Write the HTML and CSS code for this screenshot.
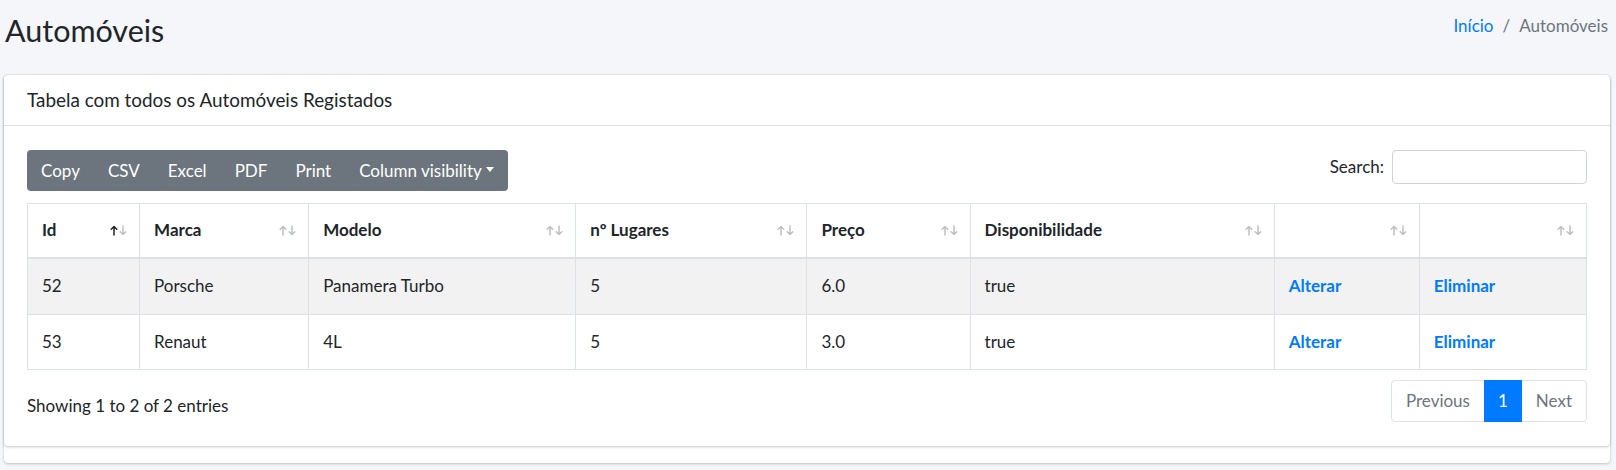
FILE: index.html
```html
<!DOCTYPE html>
<html lang="pt">
<head>
<meta charset="utf-8">
<title>Automóveis</title>
<link rel="stylesheet" href="styles.css">
</head>
<body>
<div class="content-header">
  <h1 class="page-title">Automóveis</h1>
  <ol class="breadcrumb">
    <li><a href="#">Início</a></li>
    <li class="sep">/</li>
    <li class="current">Automóveis</li>
  </ol>
</div>
<div class="card-shell">
  <div class="card">
    <div class="card-header">Tabela com todos os Automóveis Registados</div>
    <div class="card-body">
      <div class="toolbar">
        <div class="btn-group">
          <span class="btn">Copy</span>
          <span class="btn">CSV</span>
          <span class="btn">Excel</span>
          <span class="btn">PDF</span>
          <span class="btn">Print</span>
          <span class="btn">Column visibility<span class="caret"></span></span>
        </div>
        <label class="search">Search:<input type="search" class="search-input"></label>
      </div>
      <table class="data-table">
        <colgroup>
          <col class="c1"><col class="c2"><col class="c3"><col class="c4"><col class="c5"><col class="c6"><col class="c7"><col class="c8">
        </colgroup>
        <thead>
          <tr>
            <th><div class="th-in"><span>Id</span><svg class="sort asc" width="18" height="11" viewBox="0 0 18 11"><g fill="none" stroke-width="1.5" stroke-linecap="round" stroke-linejoin="round"><path class="up" d="M4 10V1.5M1.2 4.3L4 1.5L6.8 4.3"/><path class="down" d="M13 1v8.5M10.2 6.7L13 9.5L15.8 6.7"/></g></svg></div></th>
            <th><div class="th-in"><span>Marca</span><svg class="sort" width="18" height="11" viewBox="0 0 18 11"><g fill="none" stroke-width="1.5" stroke-linecap="round" stroke-linejoin="round"><path class="up" d="M4 10V1.5M1.2 4.3L4 1.5L6.8 4.3"/><path class="down" d="M13 1v8.5M10.2 6.7L13 9.5L15.8 6.7"/></g></svg></div></th>
            <th><div class="th-in"><span>Modelo</span><svg class="sort" width="18" height="11" viewBox="0 0 18 11"><g fill="none" stroke-width="1.5" stroke-linecap="round" stroke-linejoin="round"><path class="up" d="M4 10V1.5M1.2 4.3L4 1.5L6.8 4.3"/><path class="down" d="M13 1v8.5M10.2 6.7L13 9.5L15.8 6.7"/></g></svg></div></th>
            <th><div class="th-in"><span>nº Lugares</span><svg class="sort" width="18" height="11" viewBox="0 0 18 11"><g fill="none" stroke-width="1.5" stroke-linecap="round" stroke-linejoin="round"><path class="up" d="M4 10V1.5M1.2 4.3L4 1.5L6.8 4.3"/><path class="down" d="M13 1v8.5M10.2 6.7L13 9.5L15.8 6.7"/></g></svg></div></th>
            <th><div class="th-in"><span>Preço</span><svg class="sort" width="18" height="11" viewBox="0 0 18 11"><g fill="none" stroke-width="1.5" stroke-linecap="round" stroke-linejoin="round"><path class="up" d="M4 10V1.5M1.2 4.3L4 1.5L6.8 4.3"/><path class="down" d="M13 1v8.5M10.2 6.7L13 9.5L15.8 6.7"/></g></svg></div></th>
            <th><div class="th-in"><span>Disponibilidade</span><svg class="sort" width="18" height="11" viewBox="0 0 18 11"><g fill="none" stroke-width="1.5" stroke-linecap="round" stroke-linejoin="round"><path class="up" d="M4 10V1.5M1.2 4.3L4 1.5L6.8 4.3"/><path class="down" d="M13 1v8.5M10.2 6.7L13 9.5L15.8 6.7"/></g></svg></div></th>
            <th><div class="th-in"><span></span><svg class="sort" width="18" height="11" viewBox="0 0 18 11"><g fill="none" stroke-width="1.5" stroke-linecap="round" stroke-linejoin="round"><path class="up" d="M4 10V1.5M1.2 4.3L4 1.5L6.8 4.3"/><path class="down" d="M13 1v8.5M10.2 6.7L13 9.5L15.8 6.7"/></g></svg></div></th>
            <th><div class="th-in"><span></span><svg class="sort" width="18" height="11" viewBox="0 0 18 11"><g fill="none" stroke-width="1.5" stroke-linecap="round" stroke-linejoin="round"><path class="up" d="M4 10V1.5M1.2 4.3L4 1.5L6.8 4.3"/><path class="down" d="M13 1v8.5M10.2 6.7L13 9.5L15.8 6.7"/></g></svg></div></th>
          </tr>
        </thead>
        <tbody>
          <tr class="odd">
            <td>52</td><td>Porsche</td><td>Panamera Turbo</td><td>5</td><td>6.0</td><td>true</td>
            <td><a href="#" class="action">Alterar</a></td><td><a href="#" class="action">Eliminar</a></td>
          </tr>
          <tr>
            <td>53</td><td>Renaut</td><td>4L</td><td>5</td><td>3.0</td><td>true</td>
            <td><a href="#" class="action">Alterar</a></td><td><a href="#" class="action">Eliminar</a></td>
          </tr>
        </tbody>
      </table>
      <div class="table-footer">
        <div class="info">Showing 1 to 2 of 2 entries</div>
        <ul class="pagination">
          <li class="page-item disabled first"><span class="page-link">Previous</span></li>
          <li class="page-item active"><span class="page-link">1</span></li>
          <li class="page-item disabled last"><span class="page-link">Next</span></li>
        </ul>
      </div>
    </div>
  </div>
</div>
</body>
</html>
```
FILE: styles.css
```css
html, body {
  margin: 0;
  padding: 0;
}
body {
  background: #f4f6f9;
  font-family: Lato, "Noto Sans", sans-serif;
  font-size: 17px;
  line-height: 26px;
  color: #212529;
  height: 470px;
  overflow: hidden;
}
.content-header {
  display: flex;
  justify-content: space-between;
  align-items: flex-start;
  box-sizing: border-box;
  height: 75px;
  padding: 11px 8px 0 5px;
}
.page-title {
  margin: 0;
  font-size: 30.5px;
  font-weight: 400;
  line-height: 38px;
  color: #212529;
}
.breadcrumb {
  display: flex;
  list-style: none;
  margin: 2px 0 0 0;
  padding: 0;
  gap: 9px;
}
.breadcrumb a {
  color: #007bff;
  text-decoration: none;
}
.breadcrumb .sep, .breadcrumb .current {
  color: #6c757d;
}
.card-shell {
  margin: 0 6px 0 4px;
  background: #fff;
  border-radius: 4px;
  box-shadow: 0 0 1px rgba(0,0,0,.125), 0 1px 3px rgba(0,0,0,.2);
  padding-bottom: 17px;
}
.card {
  background: #fff;
  border-radius: 4px;
  box-shadow: 0 0 1px rgba(0,0,0,.125), 0 1px 3px rgba(0,0,0,.2);
}
.card-header {
  padding: 12px 23px 12px;
  font-size: 18.9px;
  border-bottom: 1px solid rgba(0,0,0,.125);
}
.card-body {
  padding: 24px 23px 24px;
}
.toolbar {
  display: flex;
  justify-content: space-between;
  align-items: flex-start;
}
.btn-group {
  display: flex;
  background: #6c757d;
  border-radius: 4px;
  height: 41px;
}
.btn {
  display: flex;
  align-items: center;
  padding: 0 14px;
  color: #fff;
}
.caret {
  display: inline-block;
  margin-left: 4px;
  margin-top: -2px;
  border-top: 5px solid #fff;
  border-left: 4.5px solid transparent;
  border-right: 4.5px solid transparent;
}
.search {
  display: flex;
  align-items: center;
  height: 34px;
}
.search-input {
  margin-left: 8px;
  width: 195px;
  height: 34px;
  box-sizing: border-box;
  border: 1px solid #ced4da;
  border-radius: 4px;
  background: #fff;
}
.data-table {
  margin-top: 12px;
  width: 100%;
  border-collapse: collapse;
  table-layout: fixed;
}
.c1 { width: 112px; }
.c2 { width: 169px; }
.c3 { width: 267px; }
.c4 { width: 231px; }
.c5 { width: 163px; }
.c6 { width: 304px; }
.c7 { width: 145px; }
.c8 { width: 167px; }
.data-table th, .data-table td {
  border: 1px solid #dee2e6;
  text-align: left;
  vertical-align: middle;
}
.data-table th {
  padding: 13px 11px 14px 14px;
  border-bottom: 2px solid #dee2e6;
  font-weight: 700;
}
.th-in {
  display: flex;
  justify-content: space-between;
  align-items: center;
  height: 26px;
}
.sort {
  flex: none;
  stroke: #bfc0c2;
}
.sort.asc .up {
  stroke: #212529;
}
.data-table td {
  padding: 14px 14px 14.5px;
}
.data-table tr.odd td {
  background: #f2f2f2;
}
.action {
  color: #007bff;
  font-weight: 700;
  text-decoration: none;
}
.table-footer {
  display: flex;
  justify-content: space-between;
  align-items: flex-start;
  margin-top: 10px;
}
.info {
  padding-top: 13px;
}
.pagination {
  display: flex;
  list-style: none;
  margin: 0;
  padding: 0;
}
.page-link {
  display: block;
  padding: 8px 14px;
  line-height: 24px;
  border: 1px solid #dee2e6;
  margin-left: -1px;
  background: #fff;
  color: #6c757d;
}
.first .page-link {
  margin-left: 0;
  border-radius: 4px 0 0 4px;
}
.last .page-link {
  border-radius: 0 4px 4px 0;
}
.active .page-link {
  background: #007bff;
  border-color: #007bff;
  color: #fff;
  position: relative;
  z-index: 1;
  padding: 8px 13px;
}
```
